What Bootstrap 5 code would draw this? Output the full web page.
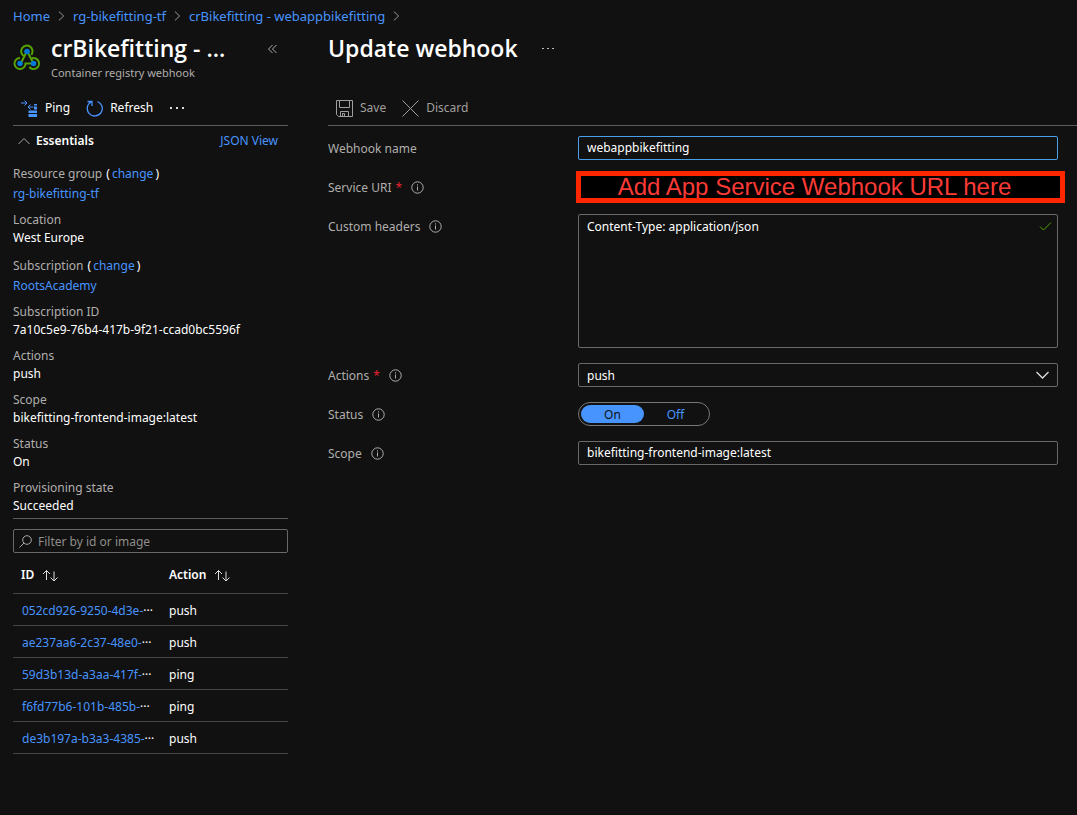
<!DOCTYPE html>
<html lang="en" data-bs-theme="dark">
<head>
<meta charset="utf-8">
<meta name="viewport" content="width=device-width, initial-scale=1">
<title>Update webhook</title>
<link href="https://cdn.jsdelivr.net/npm/bootstrap@5.3.0/dist/css/bootstrap.min.css" rel="stylesheet">
<style>
  :root { --az-bg: #111111; --az-blue: #4894fe; --az-muted: #b0aeac; --az-line: #5c5b5a; }
  body { background: var(--az-bg); color: #fff; font: 12px/18px "Noto Sans", "Open Sans", sans-serif; }
  a { color: var(--az-blue); text-decoration: none; }
  a:hover { color: #82b6ff; text-decoration: underline; }
  svg { display: block; flex: none; fill: none; stroke: currentColor; }
  .ico-blue { color: var(--az-blue); }
  .ico-green { color: #57a300; }
  .ico-grey { color: #a9a9a9; }
  .ico-light { color: #dddddd; }
  .crumbs { font-size: 13px; height: 32px; padding: 0 13px; }
  .shell { display: grid; grid-template-columns: 288px minmax(0, 1fr); column-gap: 40px; }
  .side { padding-left: 13px; }
  .blade-head { height: 60px; }
  .blade-title { font-family: "Open Sans", "Noto Sans", sans-serif; font-size: 23px; line-height: 32px; font-weight: 600; margin: 0; }
  .blade-names { margin-left: 10px; }
  .blade-kind { color: var(--az-muted); font-size: 11px; }
  .collapse-btn { margin: 12px 11px 0 0; }
  .cmdbar { height: 34px; padding: 0 0 1px 8px; border-bottom: 1px solid var(--az-line); }
  .cmd { background: none; border: 0; padding: 0; color: inherit; display: flex; align-items: center; gap: 7px; }
  .cmd:disabled { color: #a19f9d; }
  .ess-head { height: 30px; padding: 0 10px 0 5px; }
  .ess-head .cmd { gap: 6px; }
  .props { margin: 8px 0 3px; border-bottom: 1px solid var(--az-line); }
  .props dt { font-weight: 400; color: var(--az-muted); }
  .props dt span { color: #fff; margin-left: 1px; }
  .props dt a { margin: 0 2px; }
  .props dd { margin: 0 0 8px; }
  .props .linked dt, .props .linked dd { line-height: 20px; }
  .props .linked dd { margin-bottom: 7px; }
  .props .linked + div + .linked { padding-top: 1px; }
  .props > div:last-child dd { margin-bottom: 3px; }
  .filter { border: 1px solid #6b6967; border-radius: 2px; height: 24px; margin-top: 10px; padding: 0 5px; gap: 6px; }
  .filter input { background: none; border: 0; outline: 0; width: 100%; color: #fff; padding: 0; height: 20px; }
  .filter input::placeholder { color: #8f8d8b; opacity: 1; }
  .events { table-layout: fixed; width: 100%; }
  .events th { height: 40px; padding: 5px 8px 0; font-weight: 600; border-bottom: 1px solid #484644; }
  .events td { height: 32px; padding: 3px 8px 0; border-bottom: 1px solid #484644; }
  .events th:first-child { width: 148px; }
  .events td:first-child { padding: 4px 0 0 9px; }
  .fields { display: grid; grid-template-columns: 250px minmax(0, 1fr); row-gap: 15px; padding: 10px 19px 0 0; }
  .fields > .lbl { height: 25px; margin-bottom: -1px; display: flex; align-items: center; color: var(--az-muted); }
  .req { color: #e3202f; margin-left: 4px; }
  .lbl svg { margin: 0 0 0 9px; }
  .box { display: block; width: 100%; background: var(--az-bg); color: #fff; border: 1px solid #6b6967; border-radius: 2px; padding: 0 8px; height: 24px; font-size: 12px; line-height: 18px; outline: 0; }
  input.box { padding-bottom: 1px; }
  .box.active { border-color: #4aa0e8; }
  textarea.box { height: 134px; padding-top: 3px; resize: none; }
  select.box { appearance: none; padding-top: 1px; }
  .field-icon { position: absolute; right: 6px; top: 6px; pointer-events: none; }
  .field-icon.caret { right: 9px; }
  .uri { background: #000; border: 5px solid #ff2600; border-radius: 0; color: #fb3a35; height: 32px; width: calc(100% + 9px); margin: -4px 0 -4px -2px; padding: 0 12px 0 0; text-align: center; font: 24px/22px "Liberation Sans", Arial, sans-serif; outline: 0; }
  .toggle { display: inline-flex; width: 132px; height: 24px; border: 1px solid #7a7877; border-radius: 12px; padding: 2px; }
  .toggle label { flex: 1; text-align: center; border-radius: 9px; padding-top: 1px; line-height: 17px; color: var(--az-blue); cursor: pointer; }
  .toggle input:checked + label { background: var(--az-blue); color: #111; }
</style>
<script src="https://cdn.jsdelivr.net/npm/bootstrap@5.3.0/dist/js/bootstrap.bundle.min.js"></script>
</head>
<body>
<svg width="0" height="0" class="position-absolute" aria-hidden="true">
  <symbol id="info" viewBox="0 0 13 13"><circle cx="6.5" cy="6.5" r="5.7"/><path d="M6.5 5.5v4M6.5 3.3v1.2"/></symbol>
  <symbol id="next" viewBox="0 0 8 12"><path d="M1 1l5.500 5L1 11"/></symbol>
  <symbol id="sort" viewBox="0 0 16 13"><path d="M4.500 11V1.500M1 5l3.500-3.500L8 5M12 2.500V12M8.500 8.500L12 12l3.500-3.500"/></symbol>
</svg>

<nav class="crumbs d-flex align-items-center" aria-label="Breadcrumb">
  <ol class="list-unstyled d-flex align-items-center m-0 gap-2">
    <li><a href="#">Home</a></li><li><svg class="ico-grey" width="7" height="12"><use href="#next"/></svg></li>
    <li><a href="#">rg-bikefitting-tf</a></li><li><svg class="ico-grey" width="7" height="12"><use href="#next"/></svg></li>
    <li><a href="#">crBikefitting - webappbikefitting</a></li><li><svg class="ico-grey" width="7" height="12"><use href="#next"/></svg></li>
  </ol>
</nav>

<div class="shell">
  <aside class="side">
    <header class="blade-head d-flex">
      <svg class="ico-green mt-2 pt-1" width="28" height="32" viewBox="0 0 28 28" stroke-width="2">
        <path d="M11 12.200A5.700 5.700 0 1 1 18.300 10.800M14 7l-6 12M14 7l6 11.500M7 14A5.500 5.500 0 1 0 12.500 19.500h8M16.300 23A5.500 5.500 0 1 0 19 14.200"/>
        <g fill="#0078d4" stroke="none"><circle cx="14" cy="7.500" r="2.800"/><circle cx="7" cy="19.500" r="2.800"/><circle cx="20.500" cy="19.500" r="2.800"/></g>
      </svg>
      <div class="blade-names flex-grow-1">
        <h1 class="blade-title">crBikefitting - ...</h1>
        <div class="blade-kind">Container registry webhook</div>
      </div>
      <button class="cmd collapse-btn align-self-start" aria-label="Collapse"><svg class="ico-grey" width="9" height="10" viewBox="0 0 9 10"><path d="M4.500 1l-4 4 4 4M8.500 1l-4 4 4 4"/></svg></button>
    </header>
    <div class="cmdbar d-flex align-items-center gap-3">
      <button class="cmd"><svg class="ico-blue" width="17" height="17" viewBox="0 0 17 17"><path d="M0 3h6M3.500.500L6 3 3.500 5.500M7 7h5.500M9.500 4.500L7 7l2.500 2.500"/><path fill="currentColor" stroke="none" d="M7.500 10.500H16v2.500H7.500zM7.500 14H16v3H7.500zM13 4h3v1.500h-3zM13 6.500h3v3h-3z"/></svg>Ping</button>
      <button class="cmd"><svg class="ico-blue" width="17" height="17" viewBox="0 0 17 17"><path stroke-width="1.300" d="M11.500 1.500A7.500 7.500 0 1 1 5 2M1.500 1.500h4.500v4.500"/></svg>Refresh</button>
      <button class="cmd" aria-label="More"><svg width="16" height="4" viewBox="0 0 16 4"><path fill="#ddd" stroke="none" d="M1 1h2v2H1zM7 1h2v2H7zM13 1h2v2h-2z"/></svg></button>
    </div>
    <div class="ess-head d-flex align-items-center justify-content-between">
      <button class="cmd fw-semibold"><svg class="ico-grey" width="12" height="8" viewBox="0 0 12 8"><path d="M.5 7L6 1.500 11.500 7"/></svg>Essentials</button>
      <a href="#">JSON View</a>
    </div>
    <dl class="props">
      <div class="linked"><dt>Resource group <span>(<a href="#">change</a>)</span></dt><dd><a href="#">rg-bikefitting-tf</a></dd></div>
      <div><dt>Location</dt><dd>West Europe</dd></div>
      <div class="linked"><dt>Subscription <span>(<a href="#">change</a>)</span></dt><dd><a href="#">RootsAcademy</a></dd></div>
      <div><dt>Subscription ID</dt><dd>7a10c5e9-76b4-417b-9f21-ccad0bc5596f</dd></div>
      <div><dt>Actions</dt><dd>push</dd></div>
      <div><dt>Scope</dt><dd>bikefitting-frontend-image:latest</dd></div>
      <div><dt>Status</dt><dd>On</dd></div>
      <div><dt>Provisioning state</dt><dd>Succeeded</dd></div>
    </dl>
    <label class="filter d-flex align-items-center">
      <svg class="ico-grey" width="13" height="13" viewBox="0 0 13 13"><circle cx="8" cy="5" r="4.300"/><path d="M5 8L.5 12.500"/></svg>
      <input type="text" placeholder="Filter by id or image" aria-label="Filter by id or image">
    </label>
    <table class="events">
      <thead><tr><th scope="col"><span class="d-flex align-items-center gap-2">ID <svg class="ico-light" width="16" height="13"><use href="#sort"/></svg></span></th><th scope="col"><span class="d-flex align-items-center gap-2">Action <svg class="ico-light" width="16" height="13"><use href="#sort"/></svg></span></th></tr></thead>
      <tbody>
        <tr><td><a href="#">052cd926-9250-4d3e-</a>···</td><td>push</td></tr>
        <tr><td><a href="#">ae237aa6-2c37-48e0-</a>···</td><td>push</td></tr>
        <tr><td><a href="#">59d3b13d-a3aa-417f-</a>···</td><td>ping</td></tr>
        <tr><td><a href="#">f6fd77b6-101b-485b-</a>···</td><td>ping</td></tr>
        <tr><td><a href="#">de3b197a-b3a3-4385-</a>···</td><td>push</td></tr>
      </tbody>
    </table>
  </aside>

  <main>
    <header class="blade-head d-flex align-items-start">
      <h2 class="blade-title">Update webhook</h2>
      <button class="cmd mt-3 ms-4" aria-label="More"><svg width="12" height="2" viewBox="0 0 12 2"><path fill="#bbb" stroke="none" d="M0 0h2v1H0zM5 0h2v1H5zM10 0h2v1h-2z"/></svg></button>
    </header>
    <div class="cmdbar d-flex align-items-center gap-3">
      <button class="cmd" disabled><svg width="17" height="17" viewBox="0 0 17 17"><path d="M.5.500h16v16H2.500l-2-2zM3.500.500v7h10v-7M4.500 16.500v-5h8v5M6.500 16v-2.500h2V16"/></svg>Save</button>
      <button class="cmd" disabled><svg width="17" height="17" viewBox="0 0 17 17"><path d="M.5.500l16 16M16.500.500l-16 16"/></svg>Discard</button>
    </div>
    <form class="fields">
      <label class="lbl" for="name">Webhook name</label>
      <input class="box active" id="name" value="webappbikefitting">
      <label class="lbl" for="uri">Service URI<span class="req">*</span><svg width="13" height="13"><use href="#info"/></svg></label>
      <input class="uri" id="uri" value="Add App Service Webhook URL here">
      <label class="lbl" for="headers">Custom headers<svg width="13" height="13"><use href="#info"/></svg></label>
      <div class="position-relative"><textarea class="box" id="headers">Content-Type: application/json</textarea>
        <svg class="field-icon ico-green" width="13" height="12" viewBox="0 0 13 12"><path d="M1 6.500L4.500 10 12 2.500"/></svg></div>
      <label class="lbl" for="actions">Actions<span class="req">*</span><svg width="13" height="13"><use href="#info"/></svg></label>
      <div class="position-relative"><select class="box" id="actions"><option>push</option></select>
        <svg class="field-icon caret ico-light" width="13" height="12" viewBox="0 0 13 12" stroke-width="1.300"><path d="M.5 3L6.500 9l6-6"/></svg></div>
      <div class="lbl" id="status">Status<svg width="13" height="13"><use href="#info"/></svg></div>
      <div class="d-flex"><div class="toggle" role="radiogroup" aria-labelledby="status">
        <input class="visually-hidden" type="radio" name="st" id="on" checked><label for="on">On</label>
        <input class="visually-hidden" type="radio" name="st" id="off"><label for="off">Off</label></div></div>
      <label class="lbl" for="scope">Scope<svg width="13" height="13"><use href="#info"/></svg></label>
      <input class="box" id="scope" value="bikefitting-frontend-image:latest">
    </form>
  </main>
</div>
</body>
</html>
